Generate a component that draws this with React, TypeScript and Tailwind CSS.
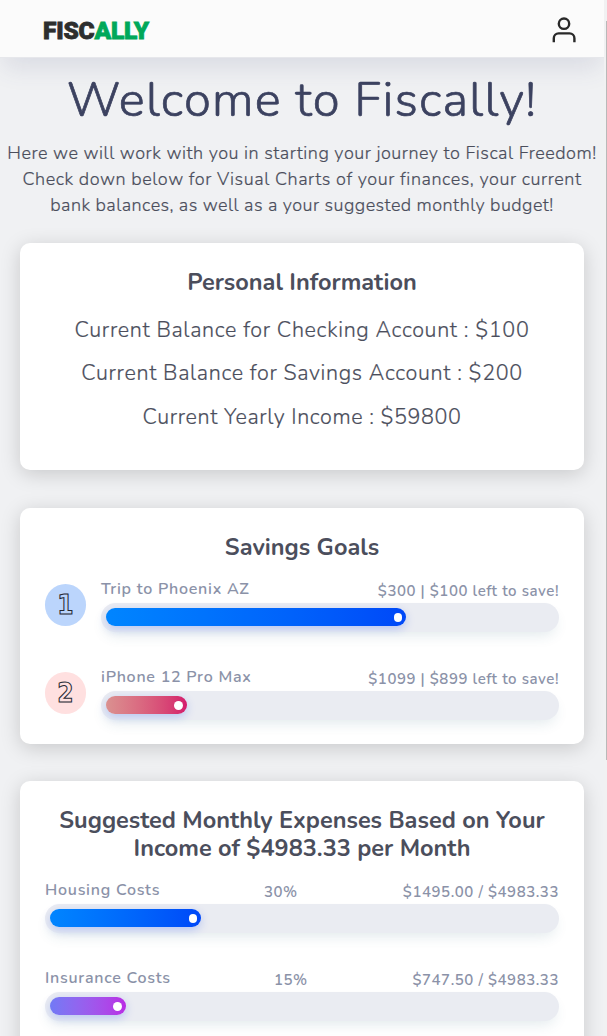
import React from "react";

type Bar = {
  label: string;
  middle?: string;
  right: string;
  middleClass?: string;
  fill: string;
  gradient: string;
  knob?: string;
};

function Progress({ bar }: { bar: Bar }) {
  return (
    <div className="flex flex-col">
      <div className="relative flex h-[26px] items-start justify-between whitespace-nowrap text-[15px] font-semibold leading-[24px] tracking-[0.56px] text-[#8b92a8]">
        <span className="text-[16px] tracking-[0.74px]">{bar.label}</span>
        {bar.middle && <span className={bar.middleClass}>{bar.middle}</span>}
        <span className="pt-[2px]">{bar.right}</span>
      </div>
      <div className="flex h-[29px] items-start rounded-full bg-[#eaecf2] px-[5px] pt-[5px] shadow-[0_7px_14px_-4px_rgba(40,100,120,0.14)]">
        <div
          className={`flex h-[18px] items-center justify-end rounded-full bg-gradient-to-r pr-[4px] shadow-[0_3px_10px_rgba(0,66,240,0.22)] ${bar.fill} ${bar.gradient}`}
        >
          <span className={`h-[9px] rounded-full bg-white ${bar.knob ?? "w-[8px]"}`} />
        </div>
      </div>
    </div>
  );
}

const goals: (Bar & { circle: string })[] = [
  {
    label: "Trip to Phoenix AZ",
    right: "$300 | $100 left to save!",
    fill: "w-[300px]",
    gradient: "from-[#0085ff] to-[#0048f8]",
    circle: "bg-[#bbd5fc]",
  },
  {
    label: "iPhone 12 Pro Max",
    right: "$1099 | $899 left to save!",
    fill: "w-[81px]",
    gradient: "from-[#da9190] to-[#d4186c]",
    knob: "w-[9px]",
    circle: "bg-[#ffe0e0]",
  },
];

const expenses: Bar[] = [
  {
    label: "Housing Costs",
    middle: "30%",
    right: "$1495.00 / $4983.33",
    middleClass: "absolute left-[219px] top-[2px]",
    fill: "w-[151px]",
    gradient: "from-[#0085ff] to-[#0048f8]",
  },
  {
    label: "Insurance Costs",
    middle: "15%",
    right: "$747.50 / $4983.33",
    middleClass: "absolute left-[229px] top-[2px]",
    fill: "w-[76px]",
    gradient: "from-[#717af5] to-[#b92be5]",
    knob: "w-[9px]",
  },
];

const card =
  "mx-[20px] rounded-[10px] bg-white shadow-[0_4px_20px_rgba(0,0,0,0.17)]";

export default function App() {
  return (
    <div className="flex h-[1036px] w-[607px] overflow-hidden bg-[#f0f1f3] font-['Nunito','Lato',sans-serif] text-[#4b4e5c]">
      <div className="flex w-[604px] flex-none flex-col">
        <header className="flex h-[58px] flex-none items-center justify-between border-b border-[#e6e7eb] bg-[#fbfbfb] pl-[43px] pr-[24px] pt-[3px] shadow-[0_14px_24px_-4px_rgba(70,80,120,0.13)]">
          <div className="whitespace-nowrap pt-[2px] font-['Roboto',sans-serif] text-[24.500px] font-black leading-none tracking-[-0.2px] text-[#2d2e2e] [-webkit-text-stroke:0.8px_currentColor]">
            FISC<span className="text-[#00a85a]">ALLY</span>
          </div>
          <svg width="32" height="32" viewBox="0 0 32 32" fill="none" stroke="#292929" strokeWidth="2.4">
            <circle cx="16" cy="9.700" r="5.200" />
            <path d="M5.800 28.300V24.200a4.800 4.800 0 0 1 4.800-4.800h11a4.800 4.800 0 0 1 4.800 4.800V28.300" />
          </svg>
        </header>

        <h1 className="h-[82px] flex-none whitespace-nowrap pt-[8px] text-center text-[49px] font-light leading-[68px] tracking-[1.2px] text-[#3c4260] [-webkit-text-stroke:0.7px_#3c4260]">
          Welcome to Fiscally!
        </h1>
        <div className="h-[103px] flex-none whitespace-nowrap text-center text-[18px] font-light leading-[26px] [-webkit-text-stroke:0.2px_currentColor]">
          <p className="tracking-[0.5px]">Here we will work with you in starting your journey to Fiscal Freedom!</p>
          <p className="tracking-[0.55px]">Check down below for Visual Charts of your finances, your current</p>
          <p className="tracking-[0.44px]">bank balances, as well as a your suggested monthly budget!</p>
        </div>

        <section className={`${card} h-[227px] flex-none whitespace-nowrap pt-[24px] text-center`}>
          <h2 className="text-[23.500px] font-bold leading-[30px]">Personal Information</h2>
          <div className="pt-[12px] text-[21.500px] font-light tracking-[0.66px] [-webkit-text-stroke:0.2px_currentColor]">
            <p className="leading-[43px]">Current Balance for Checking Account : $100</p>
            <p className="leading-[43px]">Current Balance for Savings Account : $200</p>
            <p className="leading-[45px] tracking-[0.6px]">Current Yearly Income : $59800</p>
          </div>
        </section>

        <section className={`${card} mt-[38px] h-[236px] flex-none px-[25px] pt-[24px]`}>
          <h2 className="text-center text-[23.500px] font-bold leading-[30px]">Savings Goals</h2>
          <div className="flex flex-col gap-[33px] pt-[15px]">
            {goals.map((goal, index) => (
              <div key={goal.label} className="flex">
                <div className={`mt-[7px] flex h-[42px] w-[41px] flex-none items-center justify-center rounded-full ${goal.circle}`}>
                  <span className="font-['DejaVu_Sans_Condensed','DejaVu_Sans',sans-serif] text-[26px] font-bold leading-none text-transparent [-webkit-text-stroke:1px_#262833]">
                    {index + 1}
                  </span>
                </div>
                <div className="ml-[15px] flex-1">
                  <Progress bar={goal} />
                </div>
              </div>
            ))}
          </div>
        </section>

        <section className={`${card} mt-[37px] h-[300px] flex-none px-[25px] pt-[25px]`}>
          <h2 className="whitespace-nowrap text-center text-[23.500px] font-bold leading-[28px]">
            Suggested Monthly Expenses Based on Your
            <br />
            Income of $4983.33 per Month
          </h2>
          <div className="flex flex-col gap-[33px] pt-[16px]">
            {expenses.map((bar) => (
              <Progress key={bar.label} bar={bar} />
            ))}
          </div>
        </section>
      </div>
      <div className="flex w-[3px] flex-none justify-end bg-[#f1f1f2] pt-[21px]">
        <div className="h-[739px] w-[1px] bg-[#b9b9b9]" />
      </div>
    </div>
  );
}
